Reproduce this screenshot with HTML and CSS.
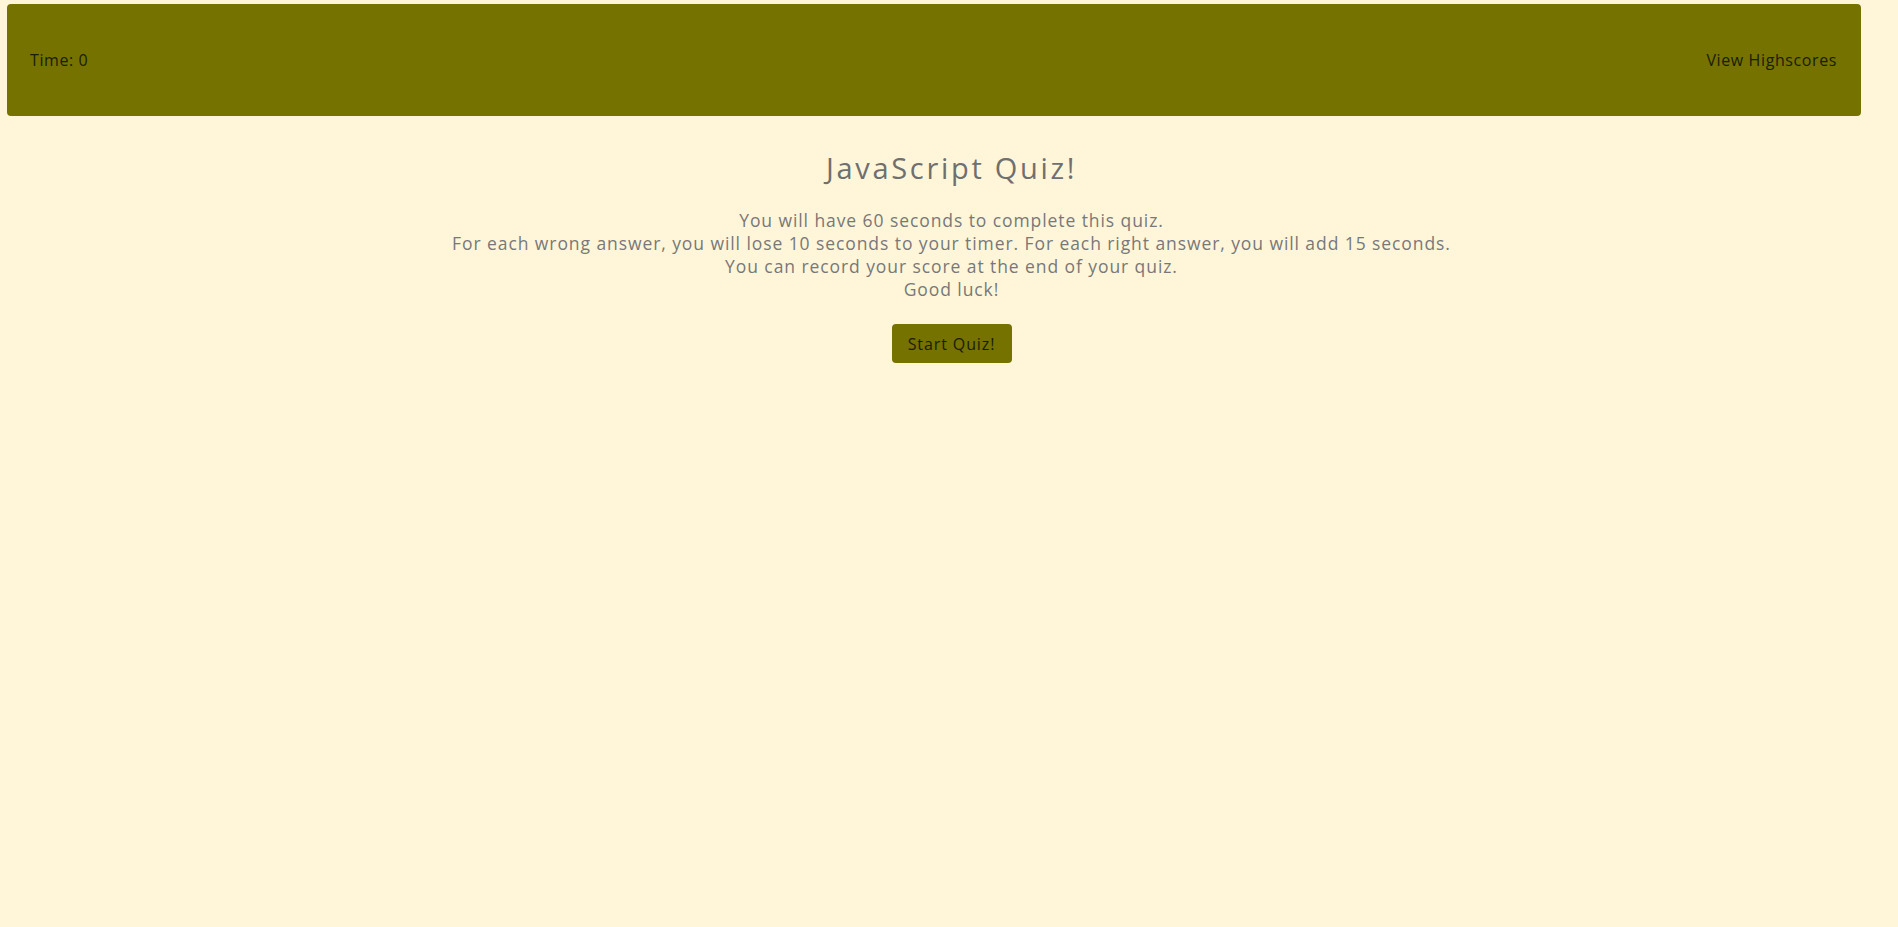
FILE: index.html
```html
<!DOCTYPE html>
<html lang="en">
<head>
<meta charset="utf-8">
<title>JavaScript Quiz</title>
<link rel="stylesheet" href="styles.css">
</head>
<body>
  <header class="topbar">
    <span class="timer">Time: 0</span>
    <a class="highscores">View Highscores</a>
  </header>
  <main class="intro">
    <h1 class="title">JavaScript Quiz!</h1>
    <p class="rules">You will have 60 seconds to complete this quiz.<br>For each wrong answer, you will lose 10 seconds to your timer. For each right answer, you will add 15 seconds.<br>You can record your score at the end of your quiz.<br>Good luck!</p>
    <button class="start">Start Quiz!</button>
  </main>
</body>
</html>
```

FILE: styles.css
```css
html, body {
  margin: 0;
  padding: 0;
  background: #fff6d9;
  font-family: "Open Sans", "Noto Sans", sans-serif;
}

.topbar {
  margin: 4px 37px 0 7px;
  height: 112px;
  padding: 0 24px 0 23px;
  background: #757200;
  border-radius: 4px;
  display: flex;
  align-items: center;
  justify-content: space-between;
  font-size: 16px;
  letter-spacing: 0.6px;
  color: #1c1c00;
}

.highscores {
  cursor: pointer;
}

.intro {
  display: flex;
  flex-direction: column;
  align-items: center;
  text-align: center;
  padding-left: 5px;
}

.title {
  margin: 34px 0 0;
  font-size: 29px;
  font-weight: 400;
  line-height: 36px;
  letter-spacing: 2.7px;
  color: #6f6f6f;
}

.rules {
  margin: 23px 0 0;
  font-size: 17.5px;
  line-height: 23px;
  letter-spacing: 0.92px;
  color: #787878;
}

.start {
  margin-top: 23px;
  width: 120px;
  height: 39px;
  border: none;
  border-radius: 4px;
  background: #757200;
  color: #1c1c00;
  font-family: inherit;
  font-size: 16px;
  letter-spacing: 0.9px;
  cursor: pointer;
}
```
